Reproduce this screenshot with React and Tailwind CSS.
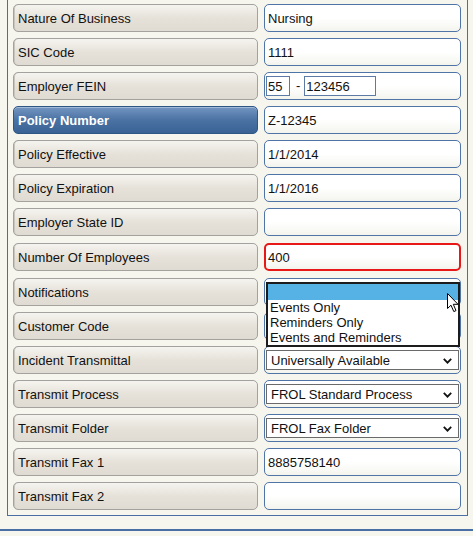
import React from 'react';

const rows = [
  { label: 'Nature Of Business', kind: 'text', value: 'Nursing' },
  { label: 'SIC Code', kind: 'text', value: '1111' },
  { label: 'Employer FEIN', kind: 'fein', prefix: '55', value: '123456' },
  { label: 'Policy Number', kind: 'text', value: 'Z-12345', active: true },
  { label: 'Policy Effective', kind: 'text', value: '1/1/2014' },
  { label: 'Policy Expiration', kind: 'text', value: '1/1/2016' },
  { label: 'Employer State ID', kind: 'text', value: '' },
  { label: 'Number Of Employees', kind: 'text', value: '400', error: true },
  { label: 'Notifications', kind: 'list' },
  { label: 'Customer Code', kind: 'text', value: '' },
  { label: 'Incident Transmittal', kind: 'select', value: 'Universally Available' },
  { label: 'Transmit Process', kind: 'select', value: 'FROL Standard Process' },
  { label: 'Transmit Folder', kind: 'select', value: 'FROL Fax Folder' },
  { label: 'Transmit Fax 1', kind: 'text', value: '8885758140' },
  { label: 'Transmit Fax 2', kind: 'text', value: '' },
];

function Label({ text, active }) {
  if (active) {
    return (
      <div className="w-[245px] h-[28px] shrink-0 flex items-center pl-[4px] pt-[1px] rounded-[5px] border border-[#2f5786] bg-gradient-to-b from-[#7496c2] via-[#4a72a3] to-[#3a6395] text-white font-bold shadow-[inset_0_1px_0_rgba(255,255,255,0.35)]">
        {text}
      </div>
    );
  }
  return (
    <div className="w-[245px] h-[28px] shrink-0 flex items-center pl-[4px] pt-[1px] rounded-[5px] border border-[#a3a29e] bg-gradient-to-b from-[#f6f4f0] via-[#e6e2da] to-[#dfdbd2] text-[#111] shadow-[inset_1px_0_0_#c9c6bf]">
      {text}
    </div>
  );
}

function Chevron() {
  return (
    <svg width="9" height="6" viewBox="0 0 9 6" className="shrink-0">
      <polyline points="0.8,0.8 4.5,4.6 8.2,0.8" fill="none" stroke="#111" strokeWidth="1.8" />
    </svg>
  );
}

function Field({ row }) {
  const shell =
    'w-[197px] h-[28px] shrink-0 rounded-[5px] bg-gradient-to-b from-white via-white to-[#f4f4ee]';

  if (row.error) {
    return (
      <div className={`${shell} border-2 border-[#e81818] flex items-center pl-[2px] pt-[1px]`}>
        {row.value}
      </div>
    );
  }

  if (row.kind === 'fein') {
    return (
      <div className={`${shell} border border-[#4f74a6] flex items-center pl-[1px]`}>
        <div className="w-[24px] h-[20px] border border-[#5b7aa6] bg-white flex items-center pl-[1px] pt-[1px]">
          {row.prefix}
        </div>
        <span className="ml-[6px] mr-[4px]">-</span>
        <div className="w-[72px] h-[20px] border border-[#5b7aa6] bg-white flex items-center pl-[1px] pt-[1px]">
          {row.value}
        </div>
      </div>
    );
  }

  if (row.kind === 'select') {
    return (
      <div className={`${shell} border border-[#4f74a6] flex items-center px-[1px]`}>
        <div className="w-[193px] h-[20px] border border-[#6a6a6a] bg-white flex items-center justify-between pl-[4px] pr-[6px] pt-[1px]">
          <span>{row.value}</span>
          <Chevron />
        </div>
      </div>
    );
  }

  if (row.kind === 'list') {
    // open listbox lying over the field and the one below it
    return (
      <div className={`${shell} border border-[#4f74a6] relative`}>
        <div className="absolute left-[1px] top-[3px] w-[194px] h-[65px] border-2 border-[#1c1c1c] bg-white z-10 flex flex-col">
          <div className="h-[16px] bg-[#56b2e4]" />
          <div className="h-[15px] leading-[16px] pl-[2px]">Events Only</div>
          <div className="h-[15px] leading-[16px] pl-[2px]">Reminders Only</div>
          <div className="h-[15px] leading-[16px] pl-[2px]">Events and Reminders</div>
        </div>
      </div>
    );
  }

  return (
    <div className={`${shell} border border-[#4f74a6] flex items-center pl-[3px] pt-[1px]`}>
      {row.value}
    </div>
  );
}

function Pointer() {
  return (
    <svg
      width="13"
      height="20"
      viewBox="0 0 13 20"
      className="absolute left-[447px] top-[293px] z-20"
    >
      <path
        d="M0.5 0.5 L0.5 15.5 L4 12.2 L6.8 18.6 L9 17.6 L6.3 11.3 L11 11.3 Z"
        fill="#fff"
        stroke="#000"
        strokeWidth="1"
        strokeLinejoin="round"
      />
    </svg>
  );
}

export default function App() {
  return (
    <div className="relative min-h-screen bg-[#f7f6ee] text-[13px] text-[#111] font-['Liberation_Sans',Arial,sans-serif]">
      <div className="ml-[7px] w-[461px] border-l border-r border-b border-[#4a6fa5] pt-[4px] pb-[5px] pl-[5px] flex flex-col gap-[6px]">
        {rows.map((row) => (
          <div
            key={row.label}
            className={`flex items-center gap-[6px] ${row.error ? 'h-[30px]' : 'h-[28px]'}`}
          >
            <Label text={row.label} active={row.active} />
            <Field row={row} />
          </div>
        ))}
      </div>
      <div className="mt-[13px] h-[2px] bg-[#4a6fa5]" />
      <Pointer />
    </div>
  );
}
